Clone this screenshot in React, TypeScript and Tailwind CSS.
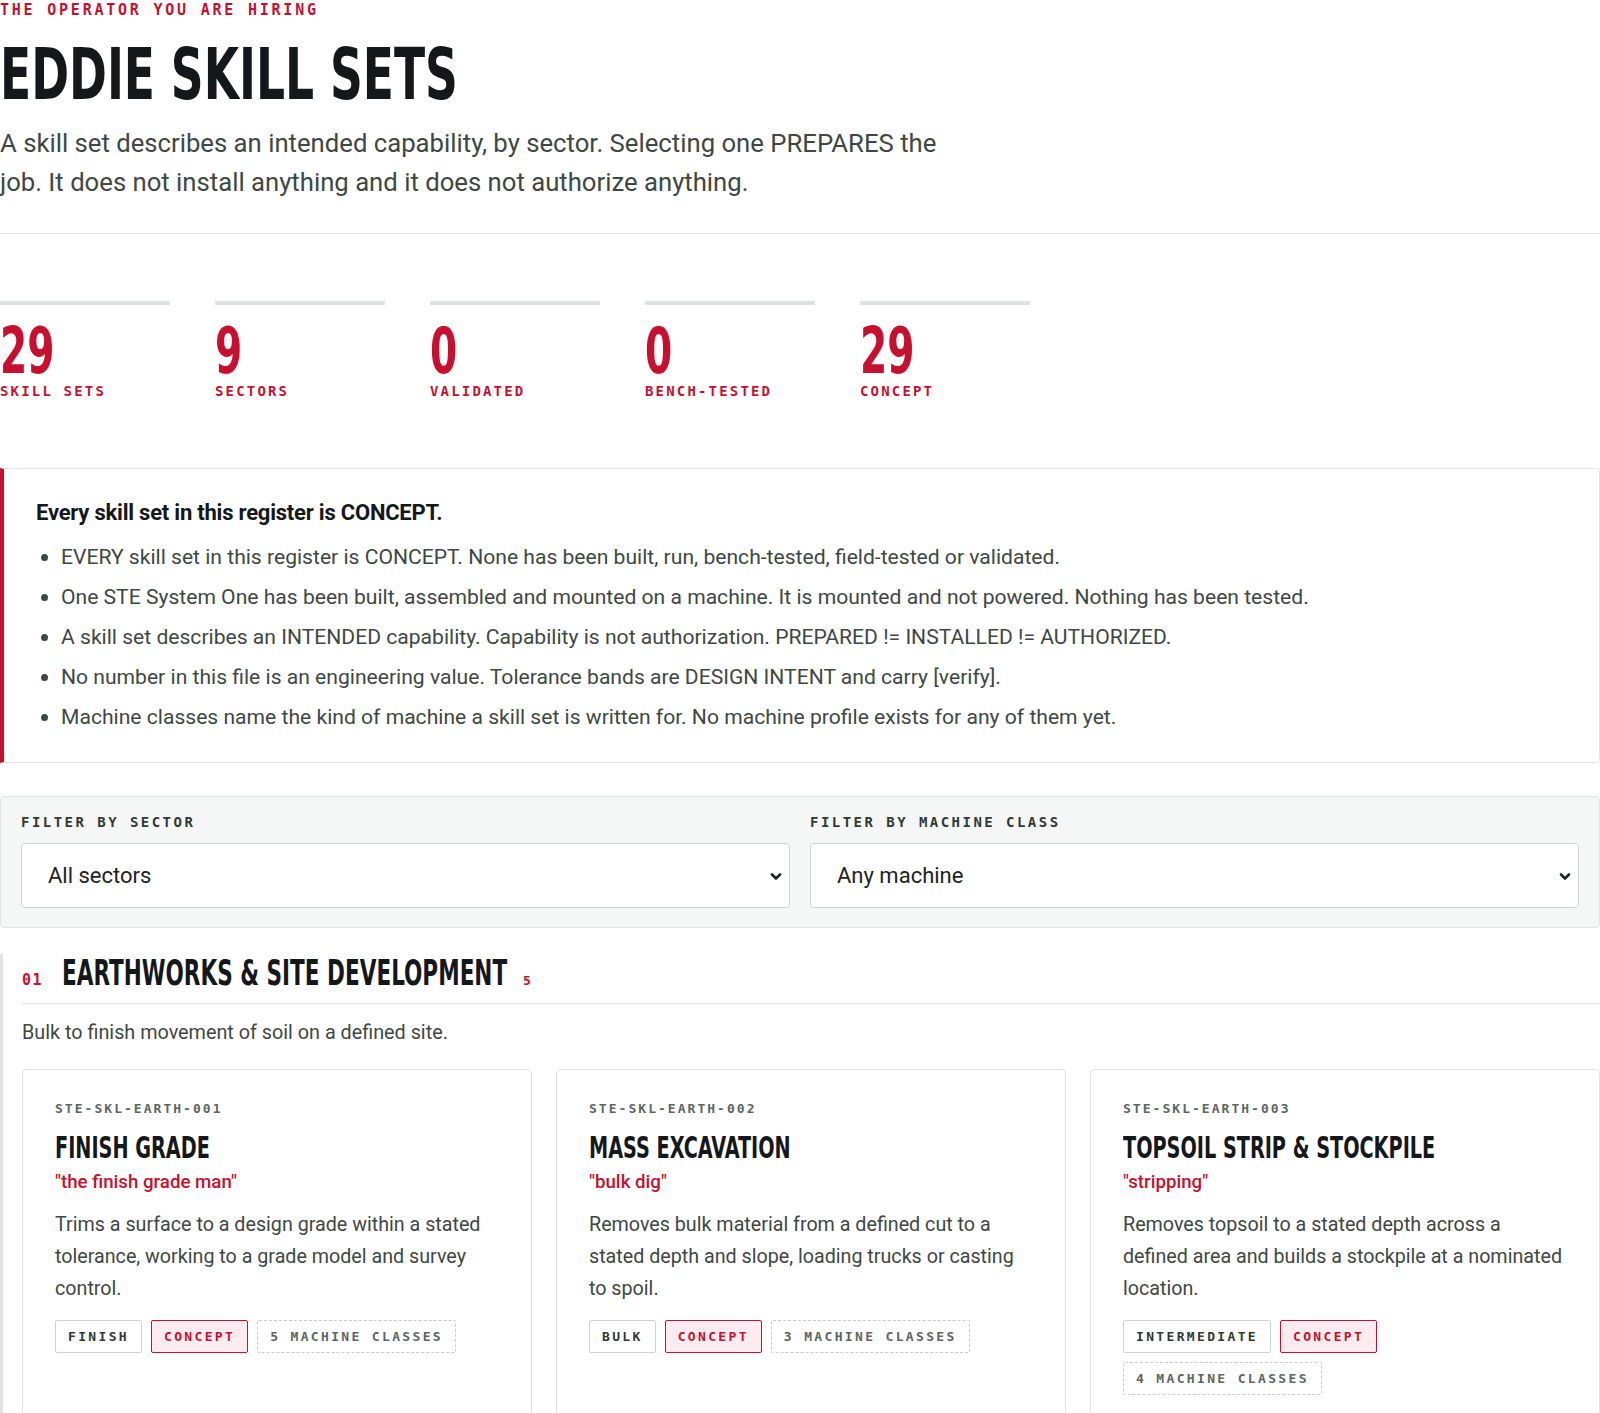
import { Fragment } from 'react'

// only DejaVu Sans Condensed is around, so the headings get squeezed horizontally
const cond = "font-['DejaVu_Sans_Condensed',sans-serif] font-bold"
const mono = "font-['DejaVu_Sans_Mono',monospace] font-bold"

const STATS = [
  { value: '29', label: 'SKILL SETS' },
  { value: '9', label: 'SECTORS' },
  { value: '0', label: 'VALIDATED' },
  { value: '0', label: 'BENCH-TESTED' },
  { value: '29', label: 'CONCEPT' },
]

const NOTES = [
  'EVERY skill set in this register is CONCEPT. None has been built, run, bench-tested, field-tested or validated.',
  'One STE System One has been built, assembled and mounted on a machine. It is mounted and not powered. Nothing has been tested.',
  'A skill set describes an INTENDED capability. Capability is not authorization. PREPARED != INSTALLED != AUTHORIZED.',
  'No number in this file is an engineering value. Tolerance bands are DESIGN INTENT and carry [verify].',
  'Machine classes name the kind of machine a skill set is written for. No machine profile exists for any of them yet.',
]

const SKILLS = [
  {
    id: 'STE-SKL-EARTH-001',
    title: 'FINISH GRADE',
    nick: 'the finish grade man',
    desc: 'Trims a surface to a design grade within a stated tolerance, working to a grade model and survey control.',
    level: 'FINISH',
    machines: 5,
  },
  {
    id: 'STE-SKL-EARTH-002',
    title: 'MASS EXCAVATION',
    nick: 'bulk dig',
    desc: 'Removes bulk material from a defined cut to a stated depth and slope, loading trucks or casting to spoil.',
    level: 'BULK',
    machines: 3,
  },
  {
    id: 'STE-SKL-EARTH-003',
    title: 'TOPSOIL STRIP & STOCKPILE',
    nick: 'stripping',
    desc: 'Removes topsoil to a stated depth across a defined area and builds a stockpile at a nominated location.',
    level: 'INTERMEDIATE',
    machines: 4,
  },
]

function Filter({ label, value }: { label: string; value: string }) {
  return (
    <div>
      <div className={`${mono} mb-[12px] text-[14px] leading-[18px] tracking-[0.176em] text-[#2f3a35]`}>{label}</div>
      <div className="relative">
        <select className="h-[65px] w-full appearance-none rounded-[4px] border border-[#cfd5d1] bg-white pl-[26px] text-[22px] text-[#1d2420] outline-none">
          <option>{value}</option>
        </select>
        <svg
          className="pointer-events-none absolute right-[6px] top-1/2 -translate-y-1/2 text-[#1d2420]"
          width="16"
          height="16"
          viewBox="0 0 16 16"
          fill="none"
        >
          <path d="M4 6.5l4 4 4-4" stroke="currentColor" strokeWidth="2.6" strokeLinecap="round" strokeLinejoin="round" />
        </svg>
      </div>
    </div>
  )
}

const tagBase = `${mono} flex h-[33px] items-center rounded-[2px] px-[12px] text-[13px] tracking-[0.18em]`

function SkillCard({ s }: { s: (typeof SKILLS)[number] }) {
  return (
    <div className="min-h-[380px] rounded-[4px] border border-[#e1e5e2] bg-white pl-[32px] pr-[36px] pt-[30px]">
      <div className={`${mono} text-[13px] leading-[18px] tracking-[0.156em] text-[#5b6761]`}>{s.id}</div>
      <h3 className={`${cond} mt-[12px] text-[31px] leading-[34px] text-[#14181a]`}>
        <span className="inline-block origin-left scale-x-[0.69] whitespace-nowrap">{s.title}</span>
      </h3>
      <div className="mt-[5px] text-[18.7px] font-medium leading-[26px] text-[#c8102e]">"{s.nick}"</div>
      <p className="mt-[14px] text-[19.7px] leading-[32px]">{s.desc}</p>
      <div className="mt-[15px] flex flex-wrap gap-[9px]">
        <span className={`${tagBase} border border-[#cdd3cf] text-[#2f3a35]`}>{s.level}</span>
        <span className={`${tagBase} border border-[#c8102e] bg-[#fdecef] text-[#c8102e]`}>CONCEPT</span>
        <span className={`${tagBase} border border-dashed border-[#c5ccc8] text-[#5b6761]`}>{s.machines} MACHINE CLASSES</span>
      </div>
    </div>
  )
}

export default function App() {
  return (
    <div className="min-h-screen bg-white font-['Roboto',sans-serif] text-[#3d4843]">
      {/* Header */}
      <header className="border-b border-[#e1e5e2] pb-[31px]">
        <div className={`${mono} text-[15px] leading-[20px] tracking-[0.185em] text-[#c8102e]`}>THE OPERATOR YOU ARE HIRING</div>
        <h1 className={`${cond} mt-[18px] text-[72px] leading-[72px] text-[#14181a]`}>
          <span className="inline-block origin-left scale-x-[0.704] whitespace-nowrap">EDDIE SKILL SETS</span>
        </h1>
        <p className="mt-[14px] max-w-[960px] text-[25.7px] leading-[39px]">
          A skill set describes an intended capability, by sector. Selecting one PREPARES the job. It does not install
          anything and it does not authorize anything.
        </p>
      </header>

      {/* Stats */}
      <div className="mt-[67px] flex gap-[45px]">
        {STATS.map(s => (
          <div key={s.label} className="w-[170px] border-t-4 border-[#dfe3df] pt-[14px]">
            <div className={`${cond} text-[64px] leading-[64px] text-[#c8102e]`}>
              <span className="inline-block origin-left scale-x-[0.68]">{s.value}</span>
            </div>
            <div className={`${mono} text-[14px] leading-[16px] tracking-[0.155em] text-[#c8102e]`}>{s.label}</div>
          </div>
        ))}
      </div>

      {/* Callout */}
      <div className="mt-[69px] rounded-r-[4px] border border-l-4 border-[#e1e5e2] border-l-[#c8102e] pb-[25px] pl-[32px] pr-8 pt-[30px]">
        <div className="text-[22px] font-bold leading-[28px] tracking-[-0.01em] text-[#14181a]">
          Every skill set in this register is CONCEPT.
        </div>
        <ul className="mt-[10px] list-disc pl-[25px] text-[21.1px] leading-[40px]">
          {NOTES.map(n => (
            <li key={n}>{n}</li>
          ))}
        </ul>
      </div>

      {/* Filters */}
      <div className="mt-[33px] grid grid-cols-2 gap-x-[20px] rounded-[4px] border border-[#e1e5e2] bg-[#f5f7f6] px-[20px] pb-[19px] pt-[16px]">
        <Filter label="FILTER BY SECTOR" value="All sectors" />
        <Filter label="FILTER BY MACHINE CLASS" value="Any machine" />
      </div>

      {/* Sector */}
      <section className="mt-[26px] border-l-[3px] border-[#e1e5e2] pl-[19px]">
        <div className="flex items-baseline border-b border-[#e1e5e2] pb-[11px]">
          <span className={`${mono} text-[15px] tracking-[0.1em] text-[#c8102e]`}>01</span>
          <h2
            className={`${cond} ml-[19px] -mr-[204px] origin-left scale-x-[0.685] whitespace-nowrap text-[35px] leading-[38px] text-[#14181a]`}
          >
            EARTHWORKS &amp; SITE DEVELOPMENT
          </h2>
          <span className={`${mono} ml-[15px] text-[13px] text-[#c8102e]`}>5</span>
        </div>
        <p className="mt-[14px] text-[19.8px] leading-[30px]">Bulk to finish movement of soil on a defined site.</p>
        <div className="mt-[21px] grid grid-cols-3 gap-[24px]">
          {SKILLS.map(s => (
            <Fragment key={s.id}>
              <SkillCard s={s} />
            </Fragment>
          ))}
        </div>
      </section>
    </div>
  )
}
